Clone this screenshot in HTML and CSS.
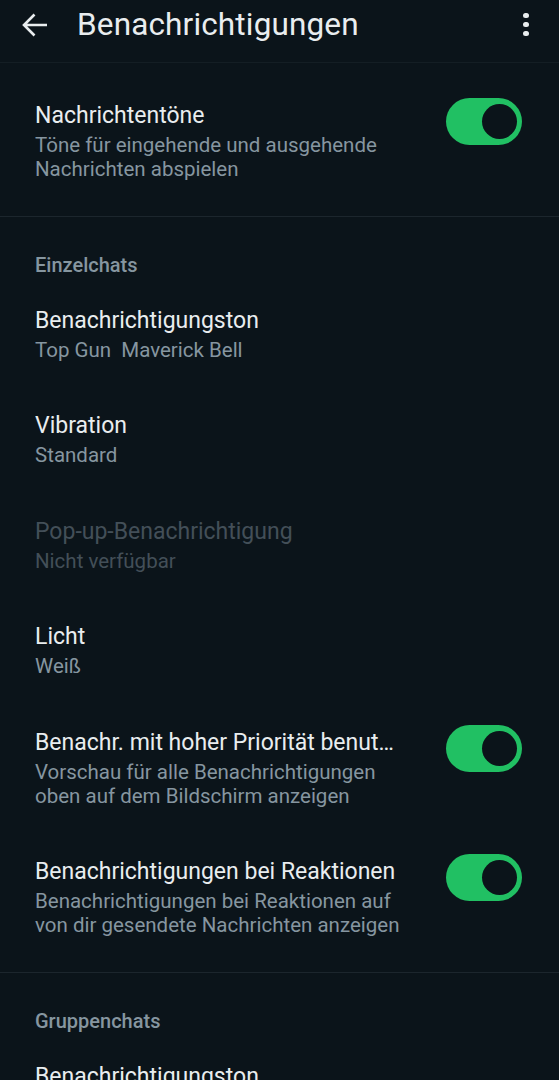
FILE: index.html
```html
<!DOCTYPE html>
<html lang="de">
<head>
<meta charset="UTF-8">
<meta name="viewport" content="width=device-width, initial-scale=1.0">
<title>Benachrichtigungen</title>
<link rel="stylesheet" href="styles.css">
</head>
<body>

<header class="appbar">
  <button class="icon-btn back" aria-label="Zurück">
    <svg width="26" height="24" viewBox="0 0 26 24">
      <path d="M2 12H25M12.5 1.5L2 12L12.5 22.5" fill="none" stroke="#e9edef" stroke-width="2.6" stroke-linecap="butt" stroke-linejoin="miter"/>
    </svg>
  </button>
  <h1 class="appbar-title">Benachrichtigungen</h1>
  <button class="icon-btn more" aria-label="Mehr">
    <span class="dot"></span><span class="dot"></span><span class="dot"></span>
  </button>
</header>

<section class="group">
  <div class="row">
    <div class="row-text">
      <div class="row-title">Nachrichtentöne</div>
      <div class="row-sub">Töne für eingehende und ausgehende Nachrichten abspielen</div>
    </div>
    <span class="switch on"></span>
  </div>
</section>

<section class="group">
  <h3 class="group-title">Einzelchats</h3>
  <div class="row">
    <div class="row-text">
      <div class="row-title">Benachrichtigungston</div>
      <div class="row-sub">Top Gun&nbsp; Maverick Bell</div>
    </div>
  </div>
  <div class="row">
    <div class="row-text">
      <div class="row-title">Vibration</div>
      <div class="row-sub">Standard</div>
    </div>
  </div>
  <div class="row disabled">
    <div class="row-text">
      <div class="row-title">Pop-up-Benachrichtigung</div>
      <div class="row-sub">Nicht verfügbar</div>
    </div>
  </div>
  <div class="row">
    <div class="row-text">
      <div class="row-title">Licht</div>
      <div class="row-sub">Weiß</div>
    </div>
  </div>
  <div class="row">
    <div class="row-text">
      <div class="row-title">Benachr. mit hoher Priorität benutzen</div>
      <div class="row-sub">Vorschau für alle Benachrichtigungen oben auf dem Bildschirm anzeigen</div>
    </div>
    <span class="switch on"></span>
  </div>
  <div class="row">
    <div class="row-text">
      <div class="row-title">Benachrichtigungen bei Reaktionen</div>
      <div class="row-sub">Benachrichtigungen bei Reaktionen auf von dir gesendete Nachrichten anzeigen</div>
    </div>
    <span class="switch on"></span>
  </div>
</section>

<section class="group">
  <h3 class="group-title">Gruppenchats</h3>
  <div class="row">
    <div class="row-text">
      <div class="row-title">Benachrichtigungston</div>
      <div class="row-sub">Standard</div>
    </div>
  </div>
</section>

</body>
</html>
```

FILE: styles.css
```css
body {
  margin: 0;
  background-color: #0b141a;
  font-family: Roboto, "Liberation Sans", sans-serif;
  color: #e9edef;
  overflow: hidden;
}

.appbar {
  display: flex;
  align-items: center;
  height: 63px;
  box-sizing: border-box;
  padding: 0 0 13px 0;
  border-bottom: 1px solid #141e24;
}

.icon-btn {
  background: none;
  border: none;
  padding: 0;
  cursor: pointer;
}

.back {
  display: flex;
  margin-left: 22px;
  width: 26px;
  height: 24px;
}

.appbar-title {
  margin: 0 0 0 29px;
  flex: 1;
  font-size: 31.5px;
  font-weight: 400;
  letter-spacing: 0.15px;
  color: #e9edef;
}

.more {
  display: flex;
  flex-direction: column;
  align-items: center;
  gap: 3.5px;
  width: 10px;
  margin-right: 28px;
}

.dot {
  width: 5.5px;
  height: 5.5px;
  border-radius: 50%;
  background-color: #e9edef;
}

.group {
  padding: 13px 0 10.5px;
  border-bottom: 1px solid #1c262d;
}

.group:last-child {
  border-bottom: none;
}

.group-title {
  margin: 0;
  padding: 23px 35px 3.5px;
  font-size: 20px;
  line-height: 24px;
  font-weight: 500;
  color: #8696a0;
}

.row {
  display: flex;
  align-items: flex-start;
  padding: 25px 37px 24.5px 35px;
}

.row-text {
  width: 366px;
}

.row-title {
  font-size: 23px;
  line-height: 30px;
  white-space: nowrap;
  overflow: hidden;
  text-overflow: ellipsis;
}

.row-sub {
  margin-top: 2px;
  font-size: 20.5px;
  line-height: 24px;
  color: #8696a0;
}

.row.disabled .row-title,
.row.disabled .row-sub {
  color: #434f58;
}

.switch {
  position: relative;
  margin: -3px 0 0 auto;
  width: 76px;
  height: 47px;
  border-radius: 24px;
  background-color: #21c063;
}

.switch.on::after {
  content: "";
  position: absolute;
  top: 6px;
  right: 5px;
  width: 35px;
  height: 35px;
  border-radius: 50%;
  background-color: #0b141a;
}
```
